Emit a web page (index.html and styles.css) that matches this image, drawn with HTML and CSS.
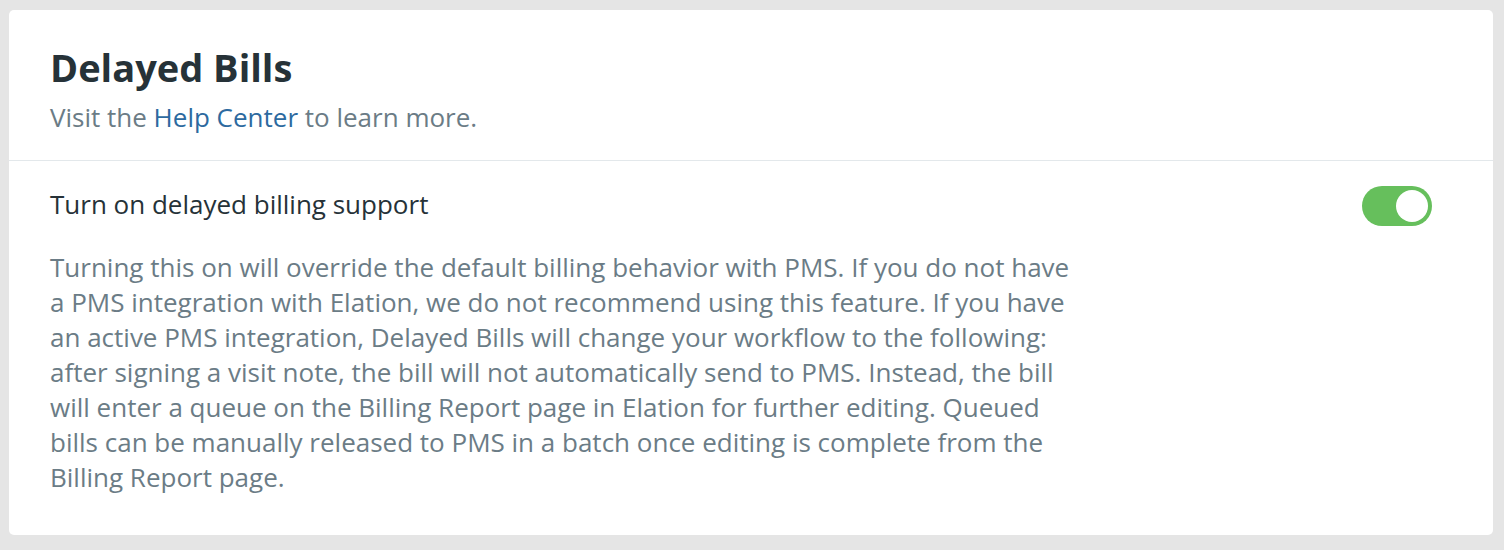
FILE: index.html
```html
<!DOCTYPE html>
<html lang="en">
<head>
<meta charset="utf-8">
<title>Delayed Bills</title>
<link rel="stylesheet" href="styles.css">
</head>
<body>
<div class="page">
  <section class="card">
    <header class="card-header">
      <h1 class="title">Delayed Bills</h1>
      <p class="subtitle">Visit the <a class="link" href="#">Help Center</a> to learn more.</p>
    </header>
    <div class="card-body">
      <div class="setting">
        <div class="setting-text">
          <div class="setting-label">Turn on delayed billing support</div>
          <p class="setting-desc">Turning this on will override the default billing behavior with PMS. If you do not have a PMS integration with Elation, we do not recommend using this feature. If you have an active PMS integration, Delayed Bills will change your workflow to the following: after signing a visit note, the bill will not automatically send to PMS. Instead, the bill will enter a queue on the Billing Report page in Elation for further editing. Queued bills can be manually released to PMS in a batch once editing is complete from the Billing Report page.</p>
        </div>
        <span class="toggle on" role="switch" aria-checked="true"><span class="knob"></span></span>
      </div>
    </div>
  </section>
</div>
</body>
</html>
```

FILE: styles.css
```css
html, body {
  margin: 0;
  padding: 0;
  background: #e5e5e5;
}
body {
  font-family: "Open Sans", "Noto Sans", sans-serif;
}
.page {
  padding: 10px 11px 14px 9px;
}
.card {
  background: #ffffff;
  border-radius: 5px;
  min-height: 525px;
  box-sizing: border-box;
}
.card-header {
  padding: 33px 41px 25px;
  border-bottom: 1px solid #e3e8eb;
}
.title {
  margin: 0;
  font-size: 38px;
  font-weight: 700;
  line-height: 48px;
  color: #263238;
}
.subtitle {
  margin: 8px 0 0;
  font-size: 26px;
  line-height: 36px;
  color: #6b7c86;
}
.link {
  color: #2d6a9f;
  text-decoration: none;
}
.card-body {
  padding: 25px 61px 30px 41px;
}
.setting {
  display: flex;
  justify-content: space-between;
  align-items: flex-start;
  gap: 40px;
}
.setting-text {
  max-width: 1030px;
}
.setting-label {
  font-size: 26px;
  line-height: 36px;
  color: #263238;
}
.setting-desc {
  margin: 28px 0 0;
  font-size: 26px;
  line-height: 35px;
  color: #6b7c86;
}
.toggle {
  flex: none;
  display: flex;
  align-items: center;
  justify-content: flex-end;
  width: 70px;
  height: 40px;
  box-sizing: border-box;
  padding: 4px;
  border-radius: 20px;
  background: #66bf5c;
}
.knob {
  width: 32px;
  height: 32px;
  border-radius: 50%;
  background: #ffffff;
}
```
